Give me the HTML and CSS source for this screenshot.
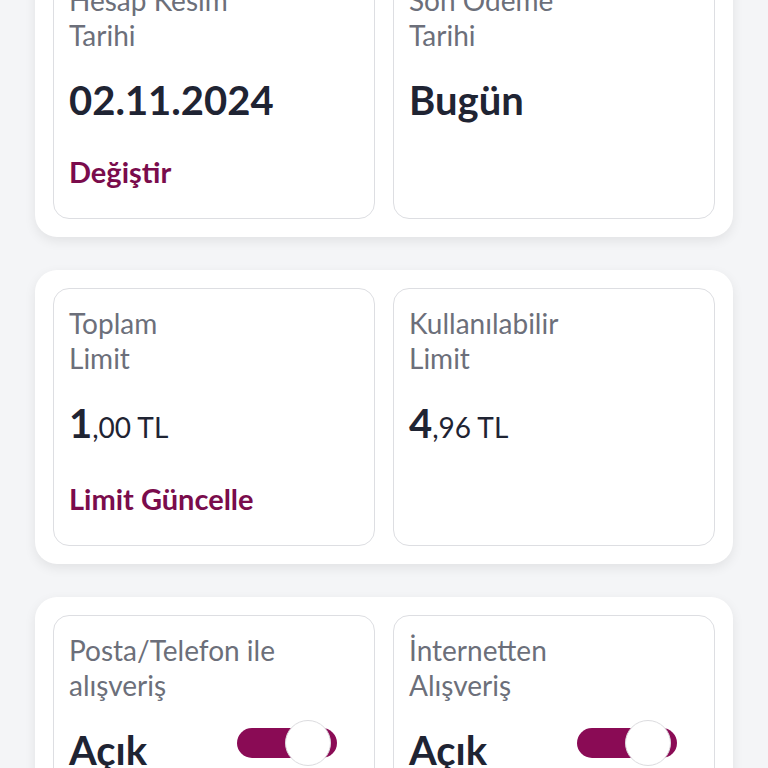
FILE: index.html
```html
<!DOCTYPE html>
<html lang="tr">
<head>
    <meta charset="UTF-8">
    <meta name="viewport" content="width=device-width, initial-scale=1.0">
    <title>Kart Detayları</title>
    <link rel="stylesheet" href="styles.css">
</head>
<body>
    <div class="page">
        <section class="panel">
            <div class="tile">
                <div class="tile-label">Hesap Kesim<br>Tarihi</div>
                <div class="tile-value">02.11.2024</div>
                <a class="tile-link" href="#">Değiştir</a>
            </div>
            <div class="tile">
                <div class="tile-label">Son Ödeme<br>Tarihi</div>
                <div class="tile-value">Bugün</div>
            </div>
        </section>

        <section class="panel">
            <div class="tile">
                <div class="tile-label">Toplam<br>Limit</div>
                <div class="tile-value">1<span class="decimals">,00 TL</span></div>
                <a class="tile-link" href="#">Limit Güncelle</a>
            </div>
            <div class="tile">
                <div class="tile-label">Kullanılabilir<br>Limit</div>
                <div class="tile-value">4<span class="decimals">,96 TL</span></div>
            </div>
        </section>

        <section class="panel">
            <div class="tile">
                <div class="tile-label">Posta/Telefon ile<br>alışveriş</div>
                <div class="tile-row">
                    <div class="tile-value">Açık</div>
                    <span class="switch on"><span class="knob"></span></span>
                </div>
            </div>
            <div class="tile">
                <div class="tile-label">İnternetten<br>Alışveriş</div>
                <div class="tile-row">
                    <div class="tile-value">Açık</div>
                    <span class="switch on"><span class="knob"></span></span>
                </div>
            </div>
        </section>
    </div>
</body>
</html>
```

FILE: styles.css
```css
html, body {
    margin: 0;
    height: 100%;
    overflow: hidden;
}
body {
    font-family: Lato, "Noto Sans", sans-serif;
    background-color: #f4f5f7;
    color: #1f2433;
}
.page {
    display: flex;
    flex-direction: column;
    gap: 33px;
    padding: 0 35px;
    margin-top: -53px;
}
.panel {
    display: grid;
    grid-template-columns: 1fr 1fr;
    gap: 18px;
    padding: 18px;
    background: #fff;
    border-radius: 22px;
    box-shadow: 0 4px 12px rgba(0, 0, 0, 0.08);
}
.tile {
    border: 1.5px solid #dddee2;
    border-radius: 16px;
    padding: 17px 15px 29px;
}
.tile-label {
    font-size: 28px;
    line-height: 35px;
    color: #6c6f7a;
}
.tile-value {
    margin-top: 23px;
    font-size: 40px;
    line-height: 48px;
    font-weight: 700;
    color: #1f2433;
}
.decimals {
    font-size: 28px;
    font-weight: 400;
}
.tile-link {
    display: block;
    margin-top: 30px;
    font-size: 29px;
    line-height: 35px;
    font-weight: 700;
    color: #7a0c4c;
    text-decoration: none;
}
.tile-row {
    display: flex;
    justify-content: space-between;
    align-items: flex-start;
}
.switch {
    position: relative;
    display: block;
    width: 100px;
    height: 30px;
    margin-top: 25px;
    margin-right: 22px;
    border-radius: 15px;
    background: #8a0b55;
}
.knob {
    position: absolute;
    top: -8px;
    right: 6px;
    width: 46px;
    height: 46px;
    box-sizing: border-box;
    border-radius: 50%;
    background: #fff;
    border: 1.5px solid #dcdcdf;
}
```
